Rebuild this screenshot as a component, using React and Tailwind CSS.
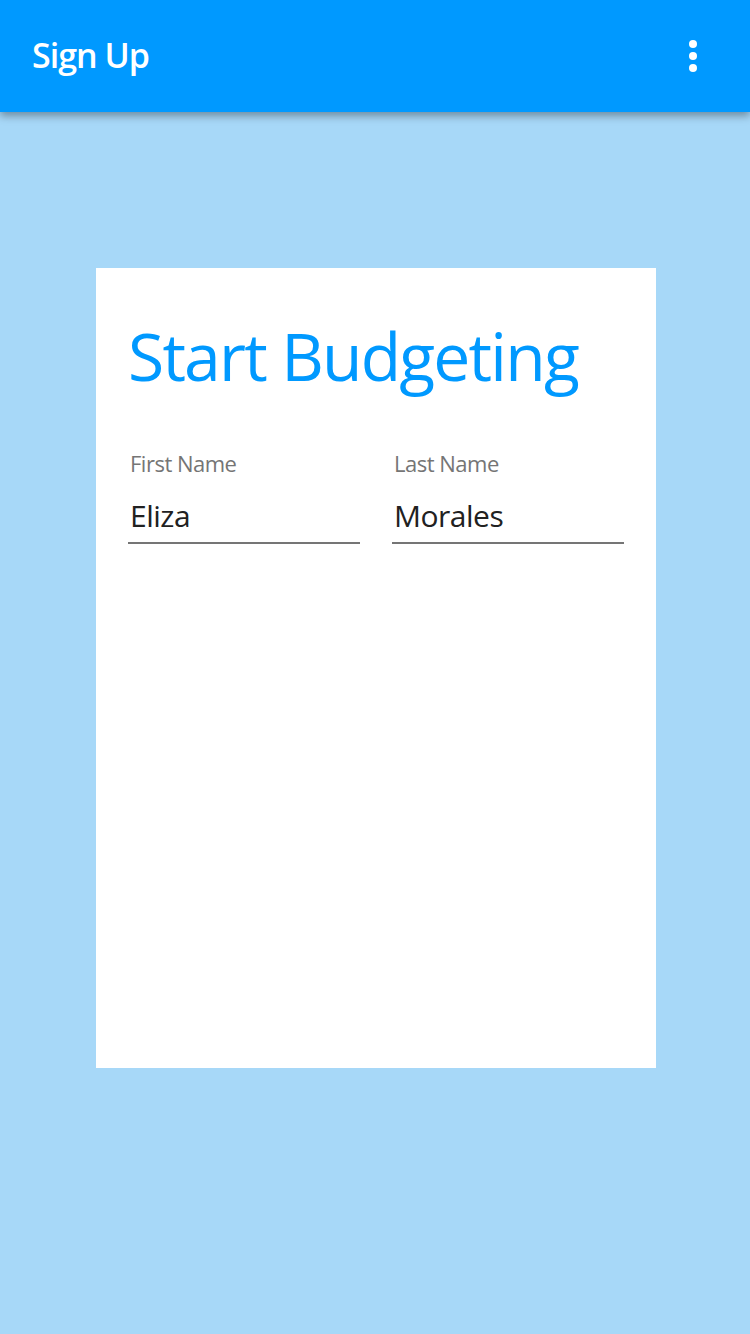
import React, { useState } from 'react';

const font = { fontFamily: '"Open Sans", Lato, sans-serif' };

const Field = ({ label, value, onChange }) => (
  <div className="flex-1 min-w-0 flex flex-col">
    <label className="pl-[2px] text-[22px] leading-none text-[#757575] tracking-[-0.5px]">{label}</label>
    <input
      type="text"
      value={value}
      onChange={e => onChange(e.target.value)}
      className="w-full min-w-0 mt-[24px] pl-[2px] pb-[8px] text-[30px] leading-[36px] text-[#212121] tracking-[-0.5px] bg-transparent outline-none border-b-2 border-[#757575]"
    />
  </div>
);

const App = () => {
  const [firstName, setFirstName] = useState('Eliza');
  const [lastName, setLastName] = useState('Morales');

  return (
    <div className="w-[750px] h-[1334px] bg-[#a7d8f8] flex flex-col" style={font}>
      {/* Toolbar */}
      <header className="relative z-10 h-[112px] bg-[#0099ff] flex items-center justify-between pl-[32px] pr-[53px] shadow-[0_4px_8px_rgba(0,0,0,0.35)]">
        <h1 className="text-white text-[34px] font-semibold tracking-[-1px] leading-none mb-[2px]">Sign Up</h1>
        <button className="flex flex-col gap-[4px] items-center">
          <span className="w-[8px] h-[8px] rounded-full bg-white" />
          <span className="w-[8px] h-[8px] rounded-full bg-white" />
          <span className="w-[8px] h-[8px] rounded-full bg-white" />
        </button>
      </header>

      {/* Card */}
      <div className="flex pt-[156px] pl-[96px]">
        <div className="w-[560px] h-[800px] bg-white px-[32px] pt-[54px]">
          <h2 className="text-[#0099ff] text-[66px] leading-none tracking-[-1.8px]">Start Budgeting</h2>
          <div className="flex gap-[32px] mt-[64px]">
            <Field label="First Name" value={firstName} onChange={setFirstName} />
            <Field label="Last Name" value={lastName} onChange={setLastName} />
          </div>
        </div>
      </div>
    </div>
  );
};

export default App;
